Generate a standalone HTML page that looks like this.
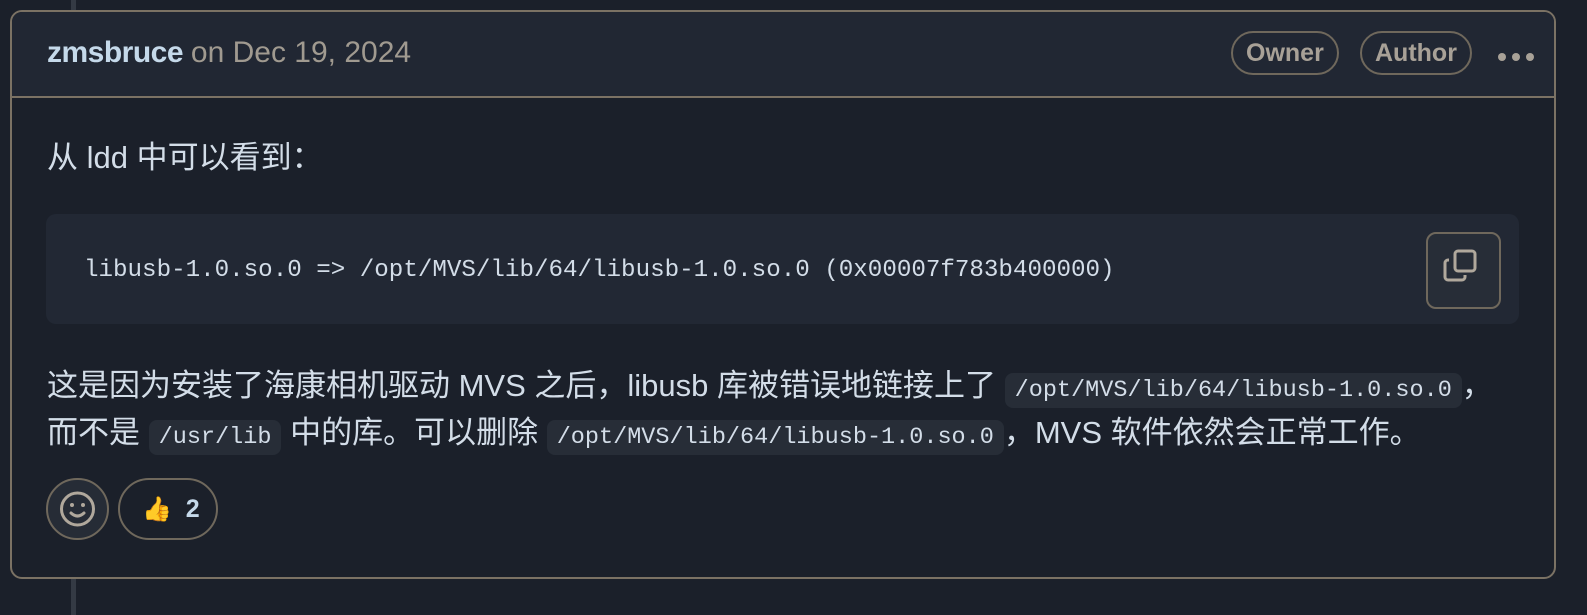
<!DOCTYPE html>
<html><head><meta charset="utf-8"><style>
*{box-sizing:border-box;margin:0;padding:0}
body{width:1587px;height:615px;background:#1b202a;position:relative;overflow:hidden;font-family:"Liberation Sans","Noto Sans CJK SC",sans-serif;color:#d3dde8}
.vl{position:absolute;left:71px;width:5px;background:#343a44;top:0;height:615px}
.card{position:absolute;left:10px;top:10px;width:1546px;height:569px;border:2px solid #7b7264;border-radius:12px;background:#1b202a;overflow:hidden}
.hd{height:86px;background:#212733;border-bottom:2px solid #7b7264;position:relative}
.name{position:absolute;left:35px;top:24px;font-size:30px;color:#c5d9ea;font-weight:bold;letter-spacing:-0.5px}
.name span{font-weight:normal;color:#a09a90;letter-spacing:0}
.badge{position:absolute;top:19px;height:44px;border:2px solid #6f685c;border-radius:22px;color:#a8a197;font-size:25px;font-weight:bold;line-height:40px;padding:0 13px}
.dots{position:absolute;right:20px;top:36px}
.dots i{display:inline-block;width:8px;height:8px;border-radius:50%;background:#a8a197;margin-left:6px}
p{position:absolute;left:35px;font-size:31px;line-height:47px;white-space:nowrap}
code{font-family:"Liberation Mono",monospace;font-size:23.5px;background:#272d37;border-radius:8px;padding:4px 10px;color:#d3dde8}
.pre{position:absolute;left:34px;top:202px;width:1473px;height:110px;background:#222834;border-radius:10px}
.ct{position:absolute;left:38px;top:43px;font-family:"Liberation Mono",monospace;font-size:24.2px;color:#d3dde8;white-space:pre}
.copy{position:absolute;right:18px;top:18px;width:75px;height:77px;border:2px solid #6f685c;border-radius:10px;background:#272d37}
.rx{position:absolute;top:466px;height:62px;border:2px solid #6f685c;border-radius:31px}
</style></head><body>
<div class="vl"></div>
<div class="card">
 <div class="hd">
  <div class="name">zmsbruce <span>on Dec 19, 2024</span></div>
  <div class="badge" style="left:1219px">Owner</div>
  <div class="badge" style="left:1348px">Author</div>
  <div class="dots"><i></i><i></i><i></i></div>
 </div>
 <p style="top:122px">从 ldd 中可以看到：</p>
 <div class="pre"><div class="ct">libusb-1.0.so.0 =&gt; /opt/MVS/lib/64/libusb-1.0.so.0 (0x00007f783b400000)</div>
  <div class="copy"><svg width="71" height="73" viewBox="0 0 71 73"><g fill="none" stroke="#b0a89c" stroke-width="3"><rect x="27" y="17" width="20" height="20" rx="3"/><path d="M21 26h-1a3 3 0 0 0-3 3v14a3 3 0 0 0 3 3h14a3 3 0 0 0 3-3v-2"/></g></svg></div>
 </div>
 <p style="top:350px">这是因为安装了海康相机驱动 MVS 之后，libusb 库被错误地链接上了 <code>/opt/MVS/lib/64/libusb-1.0.so.0</code>，</p>
 <p style="top:397px">而不是 <code>/usr/lib</code> 中的库。可以删除 <code>/opt/MVS/lib/64/libusb-1.0.so.0</code>，MVS 软件依然会正常工作。</p>
 <div class="rx" style="left:34px;width:63px;background:#262c36"><svg width="59" height="58" viewBox="0 0 59 58"><g fill="none" stroke="#b0a89c" stroke-width="3"><circle cx="29.5" cy="29" r="16"/><path d="M23 33q6.5 6 13 0" stroke-linecap="round"/></g><circle cx="24" cy="25" r="2" fill="#b0a89c"/><circle cx="35" cy="25" r="2" fill="#b0a89c"/></svg></div>
 <div class="rx" style="left:106px;width:100px;font-size:25px;font-weight:bold;line-height:58px;padding-left:22px;color:#c5d9ea"><span style="font-size:24px">👍</span>&nbsp;&nbsp;2</div>
</div>
</body></html>
